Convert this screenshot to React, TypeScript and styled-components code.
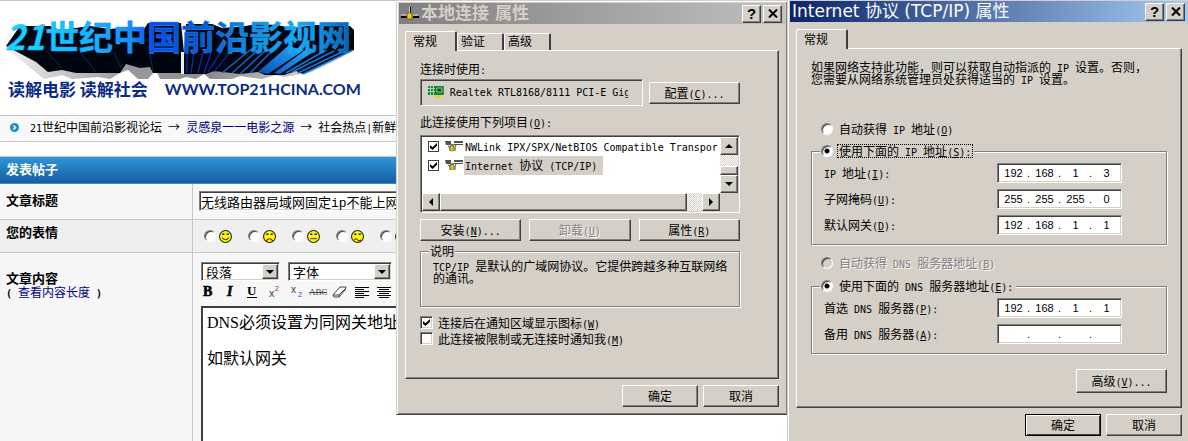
import React from "react";
import styled, { createGlobalStyle, css } from "styled-components";

const FACE = "#d4d0c8";
const CJK = '"Noto Sans CJK SC", sans-serif';

const GlobalStyle = createGlobalStyle`
  *, *::before, *::after { box-sizing: border-box; }
  body { margin: 0; background: #fff; color: #000; font: 12px/12px ${CJK}; }
  button, input, select, textarea { font: inherit; color: inherit; margin: 0; }
`;

/* ---------- text ---------- */

const Latin = styled.span`
  font-family: "DejaVu Sans Mono", monospace;
  font-size: 10px;
  line-height: 0;
  white-space: pre;
`;

/* Half-width runs use the mono face; "&" marks the access key. */
function Text({ children }: { children: string }) {
  return (
    <>
      {children.split(/([\x20-\x7e]+)/).map((run, i) => {
        if (i % 2 === 0) return run;
        const [before, after] = run.split("&");
        return (
          <Latin key={i}>
            {before}
            {after !== undefined && (
              <>
                <u>{after[0]}</u>
                {after.slice(1)}
              </>
            )}
          </Latin>
        );
      })}
    </>
  );
}

/* ---------- shared bevels ---------- */

const raised = css`
  border: 1px solid;
  border-color: #fff #404040 #404040 #fff;
  box-shadow: inset -1px -1px 0 #808080;
  background: ${FACE};
`;

const sunken = css`
  border: 1px solid;
  border-color: #808080 #fff #fff #808080;
  box-shadow: inset 1px 1px 0 #404040, inset -1px -1px 0 ${FACE};
`;

const Desktop = styled.div`
  position: relative;
  height: 100vh;
  overflow: hidden;
`;

/* ---------- forum page ---------- */

const Forum = styled.main`
  display: flex;
  flex-direction: column;
  min-height: 100%;
  border-top: 1px solid #c6c6c6;
`;

const Masthead = styled.header`
  display: flex;
  flex-direction: column;
  height: 114px;
  padding: 18px 0 0 4px;
  svg { flex: none; overflow: visible; }
`;

const Slogan = styled.div`
  display: flex;
  gap: 17px;
  padding-left: 4px;
  color: #0b2c86;
  font-size: 17px;
  font-weight: 700;
  line-height: 20px;
`;

const SiteName = styled.span`
  font-family: Lato, sans-serif;
  font-weight: 700;
  font-size: 16px;
`;

const Crumbs = styled.nav`
  display: flex;
  align-items: center;
  height: 27px;
  border: solid #c8c8c8;
  border-width: 1px 0;
  background: #f8f8f8;
  padding: 0 0 3px 10px;
  gap: 11px;
  white-space: pre;
  a { color: #000080; text-decoration: none; }
`;

const FormHead = styled.h2`
  margin: 14px 0 0;
  height: 28px;
  border-top: 1px solid #c8c8c8;
  border-bottom: 1px solid #2d8fd5;
  background: linear-gradient(#2f95da, #155e9e);
  color: #fff;
  font-size: 13px;
  line-height: 24px;
  padding-left: 6px;
`;

const Row = styled.div<{ $h?: number; $shade?: boolean; $grow?: boolean }>`
  display: grid;
  grid-template-columns: 193px 1fr;
  min-height: ${(p) => p.$h ?? 0}px;
  flex: ${(p) => (p.$grow ? "1" : "none")};
  background: ${(p) => (p.$shade ? "#efefef" : "#f7f7f7")};
  border-bottom: ${(p) => (p.$grow ? 0 : 1)}px solid #c8c8c8;
`;

const Heading = styled.label<{ $top: number }>`
  padding: ${(p) => p.$top}px 0 0 6px;
  border-right: 1px solid #c8c8c8;
  font-weight: 700;
  font-size: 13px;
  line-height: 14px;
  a { color: #000080; font-weight: 400; font-size: 12px; text-decoration: none; }
`;

const Cell = styled.div`
  display: flex;
  flex-direction: column;
  min-width: 0;
  padding-left: 6px;
`;

const Subject = styled.input`
  ${sunken}
  background: #fff;
  width: 560px;
  height: 20px;
  margin-top: 7px;
  padding: 0 1px;
  font-family: "Liberation Mono", ${CJK};
  font-size: 13px;
`;

const Moods = styled.div`
  display: flex;
  align-items: center;
  gap: 16px;
  height: 32px;
  padding-left: 5px;
`;

const Mood = styled.label`
  display: flex;
  align-items: center;
  gap: 3px;
`;

const Selects = styled.div`
  display: flex;
  gap: 8px;
  padding: 9px 0 0 2px;
`;

const SelectBox = styled.span<{ $w: number }>`
  ${sunken}
  position: relative;
  display: flex;
  width: ${(p) => p.$w}px;
  height: 19px;
  padding: 1px;
  background: #fff;
  select {
    appearance: none;
    border: 0;
    background: none;
    width: 100%;
    padding: 0 0 0 3px;
    font-size: 13px;
    line-height: 15px;
  }
  &::before {
    content: "";
    ${raised}
    position: absolute;
    right: 1px;
    top: 1px;
    width: 16px;
    height: 15px;
    pointer-events: none;
  }
  &::after {
    content: "";
    position: absolute;
    right: 5px;
    top: 7px;
    border: 4px solid transparent;
    border-top-color: #000;
    border-bottom: 0;
    pointer-events: none;
  }
`;

const Tools = styled.div`
  display: flex;
  height: 25px;
  align-items: center;
  margin-left: -2px;
  padding-bottom: 3px;
`;

const Tool = styled.button`
  width: 22px;
  height: 20px;
  border: 0;
  padding: 0;
  background: none;
  display: grid;
  place-items: center;
  flex: none;
`;

const Editor = styled.textarea`
  border: solid #404040;
  border-width: 2px 0 0 2px;
  background: #fff;
  flex: 1;
  margin-left: 2px;
  padding: 6px 4px;
  resize: none;
  outline: none;
  font-family: "Liberation Serif", ${CJK};
  font-size: 16px;
  line-height: 18px;
`;

function Logo() {
  return (
    <svg width="370" height="60" viewBox="4 19 370 60" role="img" aria-label="21世纪中国前沿影视网">
      <defs>
        <linearGradient id="face" x1="0" x2="1">
          <stop offset="0" stopColor="#12dcff" />
          <stop offset=".25" stopColor="#18b4ff" />
          <stop offset=".36" stopColor="#1590ff" />
          <stop offset=".43" stopColor="#0a48f0" />
          <stop offset=".58" stopColor="#0c58d0" />
          <stop offset=".72" stopColor="#1490e0" />
          <stop offset=".85" stopColor="#18acf8" />
          <stop offset="1" stopColor="#0a5cae" />
        </linearGradient>
        <linearGradient id="shade" x1="0" x2="1">
          <stop offset="0" stopColor="#f0f0f0" />
          <stop offset=".35" stopColor="#9a9a9a" />
          <stop offset=".6" stopColor="#8c8c8c" />
          <stop offset="1" stopColor="#e8e8e8" />
        </linearGradient>
        <linearGradient id="beam" x1="1" x2="0" y2="1">
          <stop offset="0" stopColor="#28b4ff" />
          <stop offset="1" stopColor="#0a50b8" />
        </linearGradient>
      </defs>
      {/* cast shadow on the ground */}
      <path
        d="M8 50 44 79 62 75 72 79 98 77 110 79 120 73 128 70 138 79H148L156 70 160 79H180L186 77 196 79 204 74 210 79 232 79 240 76 262 79 276 75 284 77 312 72 346 56Z"
        fill="url(#shade)"
      />
      {/* extruded sides */}
      <path
        d="M6 46 20 26 50 26 60 30 90 26 110 29 130 27 144 29 148 23H181L184 52 186 24H212L222 28 246 26 256 24 278 25 290 28 316 25 350 26 354 30V50L303 74 296 71 284 75 265 75 258 72 240 74 214 71 206 74H184L180 73H153L150 67 140 68 126 64 120 73H76L62 70 48 72 36 62Z"
        fill="#000610"
      />
      <path d="M181 52H184V74H181Z" fill="#e8eef8" />
      <g fill="none" strokeWidth="1.200" stroke="#0c2cb8">
        <path d="M187 52V73M194 52 191 73M203 52 198 73M212 50 204 73M222 50 208 72M230 52 214 72" />
      </g>
      <path d="M46 50 62 69M80 52 96 72M114 52 122 70M150 52 153 72" stroke="#0a2c50" fill="none" />
      <path d="M250 50 222 73M258 50 232 73M266 50 240 74M275 48 250 73" stroke="#1464d0" strokeWidth="1.500" fill="none" />
      <path d="M288 46 258 72 268 74 304 50ZM308 48 274 73 280 74 316 50Z" fill="url(#beam)" />
      <path d="M326 50 286 73M334 51 292 72M344 51 298 73M353 50 303 74" stroke="#1478d8" strokeWidth="1.500" fill="none" />
      <text
        x="5"
        y="50"
        fontFamily='"Noto Sans CJK SC", sans-serif'
        fontSize="34"
        fontWeight="700"
        fill="url(#face)"
        stroke="#18a0f0"
        strokeWidth=".4"
      >
        <tspan fontStyle="italic">21</tspan>世纪中国前沿影视网
      </text>
    </svg>
  );
}

const MOUTHS = [
  "M3 7Q6 11 9 7",
  "M3 10Q6 6 9 10",
  "M3 8H9",
  "M3 9Q5 7 6 9T9 9",
  "M3 7H9L6 10Z",
  "M5 8H7V10H5Z",
];

function Face({ mouth }: { mouth: string }) {
  return (
    <svg width="13" height="13" viewBox="0 0 12 12" aria-hidden="true">
      <circle cx="6" cy="6" r="5.5" fill="#ff0" stroke="#222" />
      <path d="M3 4H5M7 4H9" stroke="#00c" strokeWidth="1.4" />
      <path d={mouth} stroke="#a01010" fill="none" />
    </svg>
  );
}

function LinesIcon({ center }: { center?: boolean }) {
  return (
    <svg width="16" height="12" viewBox="0 0 16 12" stroke="#000" fill="none" aria-hidden="true">
      {center ? (
        <path d="M1 1.5H15M3 3.5H13M1 5.5H15M3 7.5H13M1 9.5H15M3 11.5H13" />
      ) : (
        <path d="M1 1.5H15M1 3.5H10M1 5.5H15M1 7.5H10M1 9.5H15M1 11.5H10" />
      )}
    </svg>
  );
}

const serif = '"Liberation Serif", serif';
const sans = '"Liberation Sans", sans-serif';

const TOOLS: [string, React.ReactNode][] = [
  ["加粗", <text x="5" y="13" fontFamily={serif} fontSize="14" fontWeight="900" stroke="#000" strokeWidth=".6">B</text>],
  ["斜体", <text x="7" y="13" fontFamily={serif} fontSize="14" fontWeight="700" fontStyle="italic" stroke="#000" strokeWidth=".6">I</text>],
  ["下划线", <><text x="5" y="12" fontFamily={serif} fontSize="13" fontWeight="700">U</text><path d="M5 14.5H15" stroke="#000" /></>],
  ["上标", <><text x="5" y="14" fontFamily={sans} fontSize="11" fill="#444">x</text><text x="11" y="8" fontFamily={sans} fontSize="7" fill="#b02020">2</text></>],
  ["下标", <><text x="5" y="10" fontFamily={sans} fontSize="10" fill="#444">x</text><text x="12" y="14" fontFamily={sans} fontSize="7" fill="#3048c0">2</text></>],
  ["删除线", <><text x="1" y="12" fontFamily={serif} fontSize="9" fill="#444">ABC</text><path d="M1 9.5H19" stroke="#444" /></>],
  ["清除格式", <path d="M3 12 10 4H16L15 7 9 14H4ZM3 12H9L16 5M9 12V14" fill="#fff" stroke="#444" />],
];

function ForumPage() {
  return (
    <Forum>
      <Masthead>
        <Logo />
        <Slogan>
          <span>读解电影 读解社会</span>
          <SiteName>WWW.TOP21HCINA.COM</SiteName>
        </Slogan>
      </Masthead>
      <Crumbs>
        <svg width="9" height="9" viewBox="0 0 9 9" aria-hidden="true">
          <circle cx="4.5" cy="4.5" r="4.5" fill="#1592c8" />
          <path d="M3.5 2.5 5.5 4.5 3.5 6.5" stroke="#fff" strokeWidth="1.5" fill="none" />
        </svg>
        <span>
          <Text>21世纪中国前沿影视论坛 → </Text>
          <a href="#board">灵感泉一一电影之源</a>
          <Text> → 社会热点|新鲜</Text>
        </span>
      </Crumbs>
      <FormHead>发表帖子</FormHead>
      <Row $h={36}>
        <Heading htmlFor="subject" $top={9}>文章标题</Heading>
        <Cell>
          <Subject id="subject" defaultValue="无线路由器局域网固定ip不能上网" />
        </Cell>
      </Row>
      <Row $h={33} $shade>
        <Heading as="div" $top={5}>您的表情</Heading>
        <Cell>
          <Moods>
            {MOUTHS.map((mouth, i) => (
              <Mood key={i}>
                <Radio type="radio" name="mood" aria-label={`表情 ${i + 1}`} />
                <Face mouth={mouth} />
              </Mood>
            ))}
          </Moods>
        </Cell>
      </Row>
      <Row $grow>
        <Heading as="div" $top={18}>
          <label htmlFor="content">文章内容</label>
          <br />
          <Latin>( </Latin>
          <a href="#length">查看内容长度</a>
          <Latin> )</Latin>
        </Heading>
        <Cell>
          <Selects>
            <SelectBox $w={79}>
              <select aria-label="段落"><option>段落</option></select>
            </SelectBox>
            <SelectBox $w={104}>
              <select aria-label="字体"><option>字体</option></select>
            </SelectBox>
          </Selects>
          <Tools>
            {TOOLS.map(([name, glyph]) => (
              <Tool key={name} type="button" aria-label={name}>
                <svg width="20" height="18" viewBox="0 0 20 18">{glyph}</svg>
              </Tool>
            ))}
            <Tool type="button" aria-label="左对齐"><LinesIcon /></Tool>
            <Tool type="button" aria-label="居中"><LinesIcon center /></Tool>
          </Tools>
          <Editor id="content" defaultValue={"DNS必须设置为同网关地址\n\n如默认网关"} />
        </Cell>
      </Row>
    </Forum>
  );
}

/* ---------- dialog parts ---------- */

const Radio = styled.input`
  appearance: none;
  flex: none;
  width: 12px;
  height: 12px;
  border-radius: 50%;
  border: 1px solid;
  border-color: #808080 #fff #fff #808080;
  box-shadow: inset 1px 1px 0 #404040;
  background: #fff;
  &:checked { background: radial-gradient(circle at 50% 50%, #000 2px, #fff 3px); }
  &:disabled { background: ${FACE}; }
`;

const Check = styled.input<{ $flat?: boolean }>`
  appearance: none;
  flex: none;
  width: ${(p) => (p.$flat ? 11 : 13)}px;
  height: ${(p) => (p.$flat ? 11 : 13)}px;
  ${(p) => (p.$flat ? "border: 1px solid #404040;" : sunken)}
  background: #fff;
  display: grid;
  place-items: center;
  &:checked::before {
    content: "";
    width: 7px;
    height: 7px;
    background: #000;
    clip-path: polygon(0 28%, 36% 60%, 100% 0, 100% 40%, 36% 100%, 0 68%);
  }
`;

const Dialog = styled.section<{ $x: number; $y: number; $w: number }>`
  position: absolute;
  left: ${(p) => p.$x}px;
  top: ${(p) => p.$y}px;
  width: ${(p) => p.$w}px;
  border: 1px solid;
  border-color: ${FACE} #404040 #404040 ${FACE};
  box-shadow: inset 1px 1px 0 #fff, inset -1px -1px 0 #808080;
  background: ${FACE};
  padding: 2px 2px 7px;
`;

const TitleBar = styled.header<{ $active?: boolean }>`
  display: flex;
  align-items: center;
  gap: 2px;
  height: 21px;
  padding: 0 3px 0 2px;
  background: ${(p) =>
    p.$active ? "linear-gradient(90deg, #0a246a, #a6caf0)" : "linear-gradient(90deg, #808080, #c0c0c0)"};
  color: ${(p) => (p.$active ? "#fff" : FACE)};
  h1 {
    flex: 1;
    margin: 0;
    font: 400 17px/21px "DejaVu Sans", ${CJK};
    font-weight: ${(p) => (p.$active ? 400 : 700)};
    white-space: nowrap;
  }
`;

const Caption = styled.button`
  ${raised}
  width: 19px;
  height: 18px;
  padding: 0;
  display: grid;
  place-items: center;
  color: #000;
  font: 700 15px/14px "Liberation Sans", sans-serif;
`;

const Body = styled.div`
  padding: 7px 6px 0;
`;

const Tabs = styled.div`
  display: flex;
  align-items: flex-end;
  height: 19px;
`;

const Tab = styled.button<{ $on?: boolean }>`
  position: relative;
  background: ${FACE};
  border: solid;
  border-width: 1px 2px 0 1px;
  border-color: #fff #404040 #fff #fff;
  border-radius: 2px 2px 0 0;
  width: ${(p) => (p.$on ? 52 : 47)}px;
  height: ${(p) => (p.$on ? 20 : 17)}px;
  margin-bottom: ${(p) => (p.$on ? -1 : 0)}px;
  padding: 0 ${(p) => (p.$on ? 11 : 14)}px 2px 0;
`;

const Panel = styled.div`
  ${raised}
  display: flex;
  flex-direction: column;
  padding: 12px 14px 33px;
`;

const Button = styled.button<{ $w?: number; $h?: number; $default?: boolean }>`
  ${raised}
  ${(p) => (p.$w ? `width: ${p.$w}px;` : "flex: 1;")}
  height: ${(p) => p.$h ?? 22}px;
  padding: 0;
  white-space: nowrap;
  &:disabled { color: #808080; text-shadow: 1px 1px 0 #fff; }
  ${(p) => p.$default && "border-color: #000; box-shadow: inset 1px 1px 0 #fff, inset -1px -1px 0 #404040;"}
`;

const Footer = styled.footer`
  display: flex;
  justify-content: flex-end;
  gap: 5px;
  margin-top: 6px;
`;

const Column = styled.div<{ $w: number }>`
  display: flex;
  flex-direction: column;
  width: ${(p) => p.$w}px;
`;

const Line = styled.div<{ $top: number; $gap: number }>`
  display: flex;
  align-items: center;
  margin-top: ${(p) => p.$top}px;
  gap: ${(p) => p.$gap}px;
`;

const Caps = styled.p<{ $top?: number }>`
  margin: ${(p) => p.$top ?? 0}px 0 0;
  line-height: 12px;
`;

const Adapter = styled.div`
  border: 1px solid;
  border-color: #808080 #fff #fff #808080;
  box-shadow: inset 1px 1px 0 #404040;
  flex: 1;
  min-width: 0;
  height: 27px;
  display: flex;
  align-items: center;
  gap: 5px;
  padding: 0 14px 2px 6px;
  span { overflow: hidden; line-height: 14px; }
`;

const List = styled.div`
  ${sunken}
  background: #fff;
  display: grid;
  grid-template: 56px 18px / 1fr 18px;
  margin-top: 7px;
  padding: 1px;
  height: 78px;
`;

const Items = styled.ul`
  list-style: none;
  margin: 0;
  padding: 0 0 0 6px;
  overflow: hidden;
`;

const Item = styled.li`
  display: flex;
  align-items: center;
  height: 19px;
  gap: 6px;
  label { display: flex; align-items: center; white-space: nowrap; }
`;

const ItemName = styled.span<{ $on?: boolean }>`
  padding: 3px 6px 4px 1px;
  background: ${(p) => (p.$on ? FACE : "none")};
`;

const Scroll = styled.div<{ $across?: boolean }>`
  display: flex;
  flex-direction: ${(p) => (p.$across ? "row" : "column")};
  background: repeating-conic-gradient(#fff 0 25%, ${FACE} 0 50%) 0 0 / 2px 2px;
`;

const Arrow = styled.button`
  ${raised}
  width: 18px;
  height: 18px;
  padding: 0;
  display: grid;
  place-items: center;
`;

const Thumb = styled.div<{ $across?: boolean }>`
  ${raised}
  flex: 1;
  margin: ${(p) => (p.$across ? "0 15px 0 0" : "11px 0 0")};
`;

const Corner = styled.div`
  background: ${FACE};
`;

const Group = styled.fieldset<{ $top: number; $pad: string }>`
  border: 1px solid #808080;
  box-shadow: 1px 1px 0 #fff, inset 1px 1px 0 #fff;
  margin: ${(p) => p.$top}px 0 0;
  padding: ${(p) => p.$pad};
  min-width: 0;
  legend {
    background: ${FACE};
    padding: 0 1px;
    margin-left: -4px;
  }
`;

const Option = styled.label<{ $off?: boolean; $focus?: boolean; $top?: number; $indent?: number }>`
  display: flex;
  align-items: center;
  gap: 4px;
  margin-top: ${(p) => p.$top ?? 0}px;
  padding-left: ${(p) => p.$indent ?? 0}px;
  height: 14px;
  white-space: nowrap;
  ${(p) => p.$off && "color: #808080; text-shadow: 1px 1px 0 #fff;"}
  > span {
    padding: 0 1px;
    border: 1px ${(p) => (p.$focus ? "dotted #000" : "solid transparent")};
  }
`;

const AddressRow = styled.div`
  display: flex;
  align-items: center;
  justify-content: space-between;
  height: 20px;
  & + & { margin-top: 6px; }
`;

const AddressBox = styled.div`
  ${sunken}
  background: #fff;
  display: flex;
  align-items: center;
  width: 125px;
  height: 20px;
  padding-left: 2px;
  font-family: "Liberation Sans", sans-serif;
  font-size: 11px;
  input {
    border: 0;
    padding: 0;
    width: 27px;
    height: 14px;
    text-align: center;
    background: none;
    outline: none;
  }
  i { width: 4px; font-style: normal; }
`;

function Address({ id, label, value }: { id: string; label: string; value: string[] }) {
  return (
    <AddressRow>
      <label htmlFor={id}><Text>{label}</Text></label>
      <AddressBox>
        {value.map((octet, i) => (
          <React.Fragment key={i}>
            {i > 0 && <i>.</i>}
            <input id={i ? undefined : id} aria-label={i ? `${id} ${i + 1}` : undefined} defaultValue={octet} />
          </React.Fragment>
        ))}
      </AddressBox>
    </AddressRow>
  );
}

function CaptionButtons() {
  return (
    <>
      <Caption type="button" aria-label="帮助">?</Caption>
      <Caption type="button" aria-label="关闭">
        <svg width="10" height="9" viewBox="0 0 10 9"><path d="M1 .5 9 8.5M9 .5 1 8.5" stroke="#000" strokeWidth="2" /></svg>
      </Caption>
    </>
  );
}

function Triangle({ d }: { d: string }) {
  return <svg width="8" height="8" viewBox="0 0 8 8" aria-hidden="true"><path d={d} /></svg>;
}

function ProtocolIcon() {
  return (
    <svg width="19" height="13" viewBox="0 0 19 13" aria-hidden="true">
      <path d="M0 1H6V5H1ZM9 1H18V3H9ZM9 4H18V5H9Z" fill="#505050" />
      <path d="M3 6 5 7V11M11 5 10 7V11" stroke="#404040" fill="none" />
      <path d="M5 4H9V8H5Z" fill="#808080" />
      <path d="M5 7 7 5 9 7V10L7 11 5 10Z" fill="#d8c820" stroke="#404000" strokeWidth=".5" />
    </svg>
  );
}

function ConnectionDialog() {
  return (
    <Dialog $x={396} $y={0} $w={392} aria-label="本地连接 属性">
      <TitleBar>
        <svg width="18" height="16" viewBox="0 0 18 16" aria-hidden="true">
          <path d="M0 10H6V12H0ZM12 10H18V12H12Z" fill="#000" />
          <path d="M0 9H6M12 9H17M8.500 1V7" stroke="#d8d8d8" />
          <path d="M9.500 1V7" stroke="#000" />
          <path d="M6 7H11V13H6Z" fill="#f8c820" stroke="#806000" />
        </svg>
        <h1>本地连接 属性</h1>
        <CaptionButtons />
      </TitleBar>
      <Body>
        <Tabs role="tablist">
          <Tab role="tab" aria-selected $on>常规</Tab>
          <Tab role="tab">验证</Tab>
          <Tab role="tab">高级</Tab>
        </Tabs>
        <Panel>
          <Column $w={320}>
            <Caps><Text>连接时使用:</Text></Caps>
            <Line $top={4} $gap={6}>
              <Adapter>
                <svg width="18" height="14" viewBox="0 0 18 14" aria-hidden="true">
                  <path d="M1 1H17V10H1Z" fill="#108030" />
                  <path d="M1 3.500H8M1 6.500H8M3.500 1V10M6.500 1V10" stroke="#b0e0b0" />
                  <path d="M10 3H15V7H10Z" fill="#204020" stroke="#90d090" />
                  <path d="M8 10H14V13H8Z" fill="#e0d020" />
                </svg>
                <span><Text>Realtek RTL8168/8111 PCI-E Gig</Text></span>
              </Adapter>
              <Button $w={91}><Text>配置(&C)...</Text></Button>
            </Line>
            <Caps $top={10}><Text>此连接使用下列项目(&O):</Text></Caps>
            <List>
              <Items>
                <Item>
                  <Check $flat type="checkbox" defaultChecked id="nwlink" />
                  <label htmlFor="nwlink">
                    <ProtocolIcon />
                    <ItemName><Text>NWLink IPX/SPX/NetBIOS Compatible Transpor...</Text></ItemName>
                  </label>
                </Item>
                <Item>
                  <Check $flat type="checkbox" defaultChecked id="tcpip" />
                  <label htmlFor="tcpip">
                    <ProtocolIcon />
                    <ItemName $on><Text>Internet 协议 (TCP/IP)</Text></ItemName>
                  </label>
                </Item>
              </Items>
              <Scroll>
                <Arrow type="button" aria-label="向上"><Triangle d="M0 6 4 2 8 6Z" /></Arrow>
                <Thumb />
                <Arrow type="button" aria-label="向下"><Triangle d="M0 2 4 6 8 2Z" /></Arrow>
              </Scroll>
              <Scroll $across>
                <Arrow type="button" aria-label="向左"><Triangle d="M6 0 2 4 6 8Z" /></Arrow>
                <Thumb $across />
                <Arrow type="button" aria-label="向右"><Triangle d="M2 0 6 4 2 8Z" /></Arrow>
              </Scroll>
              <Corner />
            </List>
            <Line $top={6} $gap={8}>
              <Button><Text>安装(&N)...</Text></Button>
              <Button disabled><Text>卸载(&U)</Text></Button>
              <Button><Text>属性(&R)</Text></Button>
            </Line>
            <Group $top={4} $pad="3px 6px 22px 12px">
              <legend>说明</legend>
              <Caps><Text>TCP/IP 是默认的广域网协议。它提供跨越多种互联网络的通讯。</Text></Caps>
            </Group>
            <Line $top={9} $gap={5}>
              <Check type="checkbox" id="tray" defaultChecked />
              <label htmlFor="tray"><Text>连接后在通知区域显示图标(&W)</Text></label>
            </Line>
            <Line $top={3} $gap={5}>
              <Check type="checkbox" id="limited" />
              <label htmlFor="limited"><Text>此连接被限制或无连接时通知我(&M)</Text></label>
            </Line>
          </Column>
        </Panel>
        <Footer>
          <Button $w={76}>确定</Button>
          <Button $w={76}>取消</Button>
        </Footer>
      </Body>
    </Dialog>
  );
}

const ProtocolPanel = styled(Panel)`
  padding-bottom: 14px;
  > button { align-self: flex-end; margin-top: 15px; }
`;

function ProtocolDialog() {
  return (
    <Dialog $x={787} $y={-2} $w={404} aria-label="Internet 协议 (TCP/IP) 属性">
      <TitleBar $active>
        <h1>Internet 协议 (TCP/IP) 属性</h1>
        <CaptionButtons />
      </TitleBar>
      <Body>
        <Tabs role="tablist">
          <Tab role="tab" aria-selected $on>常规</Tab>
        </Tabs>
        <ProtocolPanel>
          <Caps>
            <Text>如果网络支持此功能，则可以获取自动指派的 IP 设置。否则，</Text>
            <br />
            <Text>您需要从网络系统管理员处获得适当的 IP 设置。</Text>
          </Caps>
          <Option $top={37} $indent={10}>
            <Radio type="radio" name="ip" />
            <span><Text>自动获得 IP 地址(&O)</Text></span>
          </Option>
          <Group $top={8} $pad="5px 44px 9px 12px">
            <legend>
              <Option $focus>
                <Radio type="radio" name="ip" defaultChecked />
                <span><Text>使用下面的 IP 地址(&S):</Text></span>
              </Option>
            </legend>
            <Address id="ip" label="IP 地址(&I):" value={["192", "168", "1", "3"]} />
            <Address id="mask" label="子网掩码(&U):" value={["255", "255", "255", "0"]} />
            <Address id="gateway" label="默认网关(&D):" value={["192", "168", "1", "1"]} />
          </Group>
          <Option $top={11} $indent={10} $off>
            <Radio type="radio" name="dns" disabled />
            <span><Text>自动获得 DNS 服务器地址(&B)</Text></span>
          </Option>
          <Group $top={9} $pad="5px 44px 9px 12px">
            <legend>
              <Option>
                <Radio type="radio" name="dns" defaultChecked />
                <span><Text>使用下面的 DNS 服务器地址(&E):</Text></span>
              </Option>
            </legend>
            <Address id="dns1" label="首选 DNS 服务器(&P):" value={["192", "168", "1", "1"]} />
            <Address id="dns2" label="备用 DNS 服务器(&A):" value={["", "", "", ""]} />
          </Group>
          <Button $w={91} $h={24}><Text>高级(&V)...</Text></Button>
        </ProtocolPanel>
        <Footer>
          <Button $w={76} $default>确定</Button>
          <Button $w={76}>取消</Button>
        </Footer>
      </Body>
    </Dialog>
  );
}

export default function App() {
  return (
    <>
      <GlobalStyle />
      <Desktop>
        <ForumPage />
        <ConnectionDialog />
        <ProtocolDialog />
      </Desktop>
    </>
  );
}
